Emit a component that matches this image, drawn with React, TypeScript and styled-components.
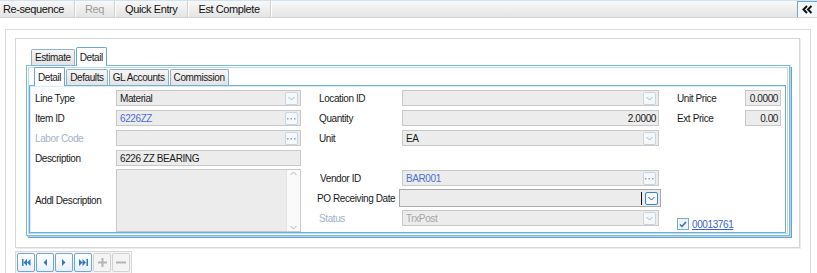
import React from 'react'
import styled, { createGlobalStyle } from 'styled-components'

const GlobalStyle = createGlobalStyle`
  html, body {
    margin: 0;
    padding: 0;
    background: #ffffff;
    font-family: 'Liberation Sans', Arial, sans-serif;
    font-size: 10px;
    letter-spacing: -0.4px;
    color: #1a1a1a;
    overflow: hidden;
  }
`

const Toolbar = styled.div`
  display: flex;
  align-items: stretch;
  height: 16px;
  border-top: 1px solid #cfe3f1;
  border-bottom: 1px solid #d4d4d4;
  background: linear-gradient(#f8f8f8, #e4e4e4);
  font-size: 11px;
`

const ToolButton = styled.div<{ disabled?: boolean }>`
  display: flex;
  align-items: center;
  padding: 0 10px;
  border-right: 1px solid #cfcfcf;
  box-shadow: 1px 0 0 #ffffff;
  color: ${({ disabled }) => (disabled ? '#9a9a9a' : '#111')};
  white-space: nowrap;
  letter-spacing: -0.4px;
  &:first-of-type {
    padding-left: 3px;
  }
  &:last-of-type {
    border-right: none;
    box-shadow: none;
  }
`

const Spacer = styled.div`
  flex: 1;
`

const CollapseButton = styled.div`
  width: 19px;
  display: flex;
  align-items: center;
  justify-content: center;
  border: 1px solid #6fa6d6;
  border-right: none;
  border-bottom: none;
  background: #f5f8fb;
`

const Page = styled.div`
  padding: 11px 6px 0 5px;
`

const OuterPanel = styled.div`
  border: 1px solid #dcdcdc;
  border-bottom: none;
  height: 240px;
  padding: 8px 10px 0 9px;
`

const InnerPanel = styled.div`
  border: 1px solid #d6d6d6;
  box-shadow: 1px 1px 0 #ececec;
  height: 200px;
  padding: 8px 9px 0 10px;
`

const TabRow = styled.div<{ inset: number }>`
  display: flex;
  align-items: flex-end;
  padding-left: ${({ inset }) => inset}px;
  height: 18px;
`

const Tab = styled.div<{ active?: boolean }>`
  display: flex;
  align-items: center;
  padding: 0 3px;
  height: ${({ active }) => (active ? 18 : 15)}px;
  margin-right: 1px;
  border: 1px solid ${({ active }) => (active ? '#6aa8d4' : '#8fb2cc')};
  border-bottom: none;
  border-radius: 2px 2px 0 0;
  background: ${({ active }) =>
    active ? '#ffffff' : 'linear-gradient(#f6f6f6, #e3e3e3)'};
  color: #1a1a1a;
  position: relative;
  z-index: ${({ active }) => (active ? 2 : 1)};
  margin-bottom: ${({ active }) => (active ? -1 : 0)}px;
`

const TabBody = styled.div`
  border: 1px solid #7db6dc;
  box-shadow: inset 0 0 0 1px #ffffff, inset 0 0 0 2px #b9d9ee, 1px 1px 0 #b6d6ec, 2px 2px 0 #5ea3d3;
  height: 168px;
  padding: 1px 3px 0 2px;
`

const SubTabBody = styled.div`
  border: 1px solid #6fb0da;
  box-shadow: inset 1px 1px 0 #d8ebf7;
  height: 142px;
  padding: 4px 0 0 5px;
  display: flex;
`

const Section = styled.div<{ labelWidth: number; fieldWidth: number; gap: number }>`
  display: grid;
  grid-template-columns: ${({ labelWidth, fieldWidth }) => `${labelWidth}px ${fieldWidth}px`};
  grid-auto-rows: 20px;
  margin-right: ${({ gap }) => gap}px;
  align-content: start;
`

const Label = styled.div<{ muted?: boolean; shift?: number }>`
  height: 16px;
  display: flex;
  align-items: center;
  color: ${({ muted }) => (muted ? '#9fb3c8' : '#1a1a1a')};
  margin-left: ${({ shift }) => shift || 0}px;
  white-space: nowrap;
`

const Field = styled.div<{ tone?: 'link' | 'muted'; right?: boolean; focus?: boolean }>`
  box-sizing: border-box;
  display: flex;
  align-items: center;
  justify-content: ${({ right }) => (right ? 'flex-end' : 'flex-start')};
  padding: 0 2px 0 3px;
  background: #ececec;
  border: 1px solid ${({ focus }) => (focus ? '#a9a9a9' : '#c9c9c9')};
  color: ${({ tone }) =>
    tone === 'link' ? '#4d6fd6' : tone === 'muted' ? '#a4a4a4' : '#1a1a1a'};
  margin: ${({ focus }) => (focus ? '-1px -2px 0 -3px' : '0')};
  height: ${({ focus }) => (focus ? 18 : 16)}px;
`

const FieldText = styled.span`
  flex: 1;
  white-space: nowrap;
  overflow: hidden;
`

const FieldButton = styled.div<{ strong?: boolean }>`
  width: 11px;
  height: 11px;
  border: 1px solid ${({ strong }) => (strong ? '#3f83b8' : '#c9d6e2')};
  border-radius: 2px;
  background: ${({ strong }) => (strong ? '#f4f9fd' : '#f6f9fb')};
  display: flex;
  align-items: center;
  justify-content: center;
  flex: none;
`

const Caret = styled.div`
  width: 1px;
  height: 13px;
  background: #111;
  margin-right: 3px;
`

const TextArea = styled.div`
  box-sizing: border-box;
  grid-column: 2;
  grid-row: span 3;
  height: 63px;
  margin-top: -1px;
  background: #ececec;
  border: 1px solid #c9c9c9;
  display: flex;
  justify-content: flex-end;
`

const ScrollTrack = styled.div`
  width: 13px;
  background: #fafafa;
  border-left: 1px solid #e2e2e2;
  display: flex;
  flex-direction: column;
  justify-content: space-between;
  align-items: center;
  padding: 1px 0;
`

const AreaLabel = styled(Label)`
  grid-row: span 3;
  height: 60px;
`

const Blank = styled.div`
  grid-column: span 2;
`

const CheckRow = styled.div`
  grid-column: span 2;
  grid-row: 7;
  display: flex;
  align-items: center;
  margin-top: 8px;
  height: 12px;
`

const CheckBox = styled.div`
  box-sizing: border-box;
  width: 12px;
  height: 12px;
  border: 1px solid #7aa9cf;
  background: #eef5fb;
  display: flex;
  align-items: center;
  justify-content: center;
  margin-right: 3px;
`

const Link = styled.a`
  color: #3d5fd0;
  text-decoration: underline;
`

const NavBar = styled.div`
  display: inline-flex;
  margin-top: 3px;
  border: 1px solid #d8d8d8;
  padding: 1px;
  gap: 1px;
  background: #f4f4f4;
`

const NavButton = styled.div<{ off?: boolean }>`
  box-sizing: border-box;
  width: 18px;
  height: 19px;
  border: 1px solid ${({ off }) => (off ? '#d2d2d2' : '#6fa6d6')};
  border-radius: 2px;
  background: ${({ off }) => (off ? '#f4f4f4' : 'linear-gradient(#ffffff, #e8f0f7)')};
  display: flex;
  align-items: center;
  justify-content: center;
`

const Chevron = ({ color = '#a7b6c4' }: { color?: string }) => (
  <svg width="7" height="5" viewBox="0 0 7 5">
    <path d="M0.5 1 L3.5 4 L6.5 1" fill="none" stroke={color} strokeWidth="1" />
  </svg>
)

const ChevronUp = () => (
  <svg width="7" height="5" viewBox="0 0 7 5">
    <path d="M0.5 4 L3.5 1 L6.5 4" fill="none" stroke="#a7b6c4" strokeWidth="1" />
  </svg>
)

const Dots = () => (
  <svg width="9" height="3" viewBox="0 0 9 3">
    <rect x="0" y="1" width="1.5" height="1.5" fill="#8aa3bb" />
    <rect x="3.5" y="1" width="1.5" height="1.5" fill="#8aa3bb" />
    <rect x="7" y="1" width="1.5" height="1.5" fill="#8aa3bb" />
  </svg>
)

const Combo = ({ value, tone }: { value?: string; tone?: 'link' | 'muted' }) => (
  <Field tone={tone}>
    <FieldText>{value}</FieldText>
    <FieldButton>
      <Chevron />
    </FieldButton>
  </Field>
)

const Lookup = ({ value, tone }: { value?: string; tone?: 'link' | 'muted' }) => (
  <Field tone={tone}>
    <FieldText>{value}</FieldText>
    <FieldButton>
      <Dots />
    </FieldButton>
  </Field>
)

const NavIcon = ({ kind }: { kind: 'first' | 'prev' | 'next' | 'last' | 'add' | 'remove' }) => {
  const blue = '#2f7dc0'
  const gray = '#b4b4b4'
  switch (kind) {
    case 'first':
      return (
        <svg width="9" height="7" viewBox="0 0 9 7">
          <rect x="0" y="0" width="1.5" height="7" fill={blue} />
          <path d="M5 0 L1.5 3.5 L5 7 Z M8.5 0 L5 3.5 L8.5 7 Z" fill={blue} />
        </svg>
      )
    case 'prev':
      return (
        <svg width="4" height="7" viewBox="0 0 4 7">
          <path d="M4 0 L0.5 3.5 L4 7 Z" fill={blue} />
        </svg>
      )
    case 'next':
      return (
        <svg width="4" height="7" viewBox="0 0 4 7">
          <path d="M0 0 L3.5 3.5 L0 7 Z" fill={blue} />
        </svg>
      )
    case 'last':
      return (
        <svg width="9" height="7" viewBox="0 0 9 7">
          <path d="M0 0 L3.5 3.5 L0 7 Z M3.5 0 L7 3.5 L3.5 7 Z" fill={blue} />
          <rect x="7.5" y="0" width="1.5" height="7" fill={blue} />
        </svg>
      )
    case 'add':
      return (
        <svg width="9" height="9" viewBox="0 0 9 9">
          <rect x="3.5" y="0" width="2" height="9" fill={gray} />
          <rect x="0" y="3.5" width="9" height="2" fill={gray} />
        </svg>
      )
    case 'remove':
      return (
        <svg width="10" height="9" viewBox="0 0 10 9">
          <rect x="0" y="3.5" width="10" height="2" fill={gray} />
        </svg>
      )
  }
}

export default function App() {
  return (
    <>
      <GlobalStyle />
      <Toolbar>
        <ToolButton>Re-sequence</ToolButton>
        <ToolButton disabled>Req</ToolButton>
        <ToolButton>Quick Entry</ToolButton>
        <ToolButton>Est Complete</ToolButton>
        <Spacer />
        <CollapseButton>
          <svg width="11" height="9" viewBox="0 0 11 9">
            <path d="M5 1 L1.5 4.5 L5 8 M9.5 1 L6 4.5 L9.5 8" fill="none" stroke="#111" strokeWidth="2" />
          </svg>
        </CollapseButton>
      </Toolbar>
      <Page>
        <OuterPanel>
          <InnerPanel>
            <TabRow inset={5}>
              <Tab>Estimate</Tab>
              <Tab active>Detail</Tab>
            </TabRow>
            <TabBody>
              <TabRow inset={5}>
                <Tab active>Detail</Tab>
                <Tab>Defaults</Tab>
                <Tab>GL Accounts</Tab>
                <Tab>Commission</Tab>
              </TabRow>
              <SubTabBody>
                <Section labelWidth={81} fieldWidth={185} gap={18}>
                  <Label>Line Type</Label>
                  <Combo value="Material" />
                  <Label>Item ID</Label>
                  <Lookup value="6226ZZ" tone="link" />
                  <Label muted>Labor Code</Label>
                  <Lookup />
                  <Label>Description</Label>
                  <Field>
                    <FieldText>6226 ZZ BEARING</FieldText>
                  </Field>
                  <AreaLabel>Addl Description</AreaLabel>
                  <TextArea>
                    <ScrollTrack>
                      <ChevronUp />
                      <Chevron />
                    </ScrollTrack>
                  </TextArea>
                </Section>
                <Section labelWidth={83} fieldWidth={257} gap={18}>
                  <Label>Location ID</Label>
                  <Combo />
                  <Label>Quantity</Label>
                  <Field right>2.0000</Field>
                  <Label>Unit</Label>
                  <Combo value="EA" />
                  <Blank />
                  <Label shift={1}>Vendor ID</Label>
                  <Lookup value="BAR001" tone="link" />
                  <Label shift={-2}>PO Receiving Date</Label>
                  <Field focus>
                    <FieldText />
                    <Caret />
                    <FieldButton strong>
                      <Chevron color="#1f5f96" />
                    </FieldButton>
                  </Field>
                  <Label muted>Status</Label>
                  <Combo value="TrxPost" tone="muted" />
                </Section>
                <Section labelWidth={68} fieldWidth={36} gap={0}>
                  <Label>Unit Price</Label>
                  <Field right>0.0000</Field>
                  <Label>Ext Price</Label>
                  <Field right>0.00</Field>
                  <CheckRow>
                    <CheckBox>
                      <svg width="8" height="7" viewBox="0 0 8 7">
                        <path d="M1 3.5 L3 5.5 L7 1" fill="none" stroke="#2f6fa8" strokeWidth="1.5" />
                      </svg>
                    </CheckBox>
                    <Link>00013761</Link>
                  </CheckRow>
                </Section>
              </SubTabBody>
            </TabBody>
          </InnerPanel>
          <NavBar>
            <NavButton><NavIcon kind="first" /></NavButton>
            <NavButton><NavIcon kind="prev" /></NavButton>
            <NavButton><NavIcon kind="next" /></NavButton>
            <NavButton><NavIcon kind="last" /></NavButton>
            <NavButton off><NavIcon kind="add" /></NavButton>
            <NavButton off><NavIcon kind="remove" /></NavButton>
          </NavBar>
        </OuterPanel>
      </Page>
    </>
  )
}
